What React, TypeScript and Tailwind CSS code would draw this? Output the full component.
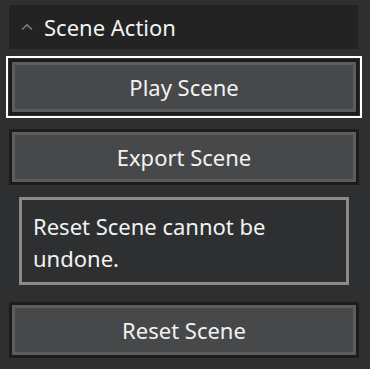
import React from "react";

const font = { fontFamily: '"Noto Sans", "Open Sans", sans-serif' };

function ActionButton({ label, focused }: { label: string; focused?: boolean }) {
  return (
    <button
      className={
        "ml-[9px] flex h-[56px] w-[350px] items-center justify-center border-[3px] border-[#1c1c1d] bg-[#47484a] text-[22px] text-[#f2f2f2] shadow-[inset_0_0_0_3px_#5c5d5f] " +
        (focused ? "outline-2 outline-offset-1 outline-white" : "outline-none")
      }
    >
      {label}
    </button>
  );
}

export default function App() {
  return (
    <div
      className="flex min-h-screen w-full flex-col bg-[#2e2f31] pt-[5px] leading-none"
      style={font}
    >
      {/* section header */}
      <div className="ml-[9px] flex h-[44px] w-[349px] items-center bg-[#232323]">
        <svg
          className="ml-[12px] mr-[11px]"
          width="12"
          height="6"
          viewBox="0 0 12 6"
          fill="none"
        >
          <polyline
            points="1,5.5 6,0.8 11,5.5"
            stroke="#7a7a7a"
            strokeWidth="1.6"
          />
        </svg>
        <span className="text-[22px] text-[#f2f2f2]">Scene Action</span>
      </div>

      <div className="mt-[10px]">
        <ActionButton label="Play Scene" focused />
      </div>
      <div className="mt-[14px]">
        <ActionButton label="Export Scene" />
      </div>

      {/* warning */}
      <div className="ml-[19px] mt-[12px] w-[330px] border-[3px] border-[#8b8b8b] px-[11px] pb-[8px] pt-[10px] text-[22px] leading-[32px] text-[#f2f2f2]">
        Reset Scene cannot be undone.
      </div>

      <div className="mt-[17px]">
        <ActionButton label="Reset Scene" />
      </div>
    </div>
  );
}
